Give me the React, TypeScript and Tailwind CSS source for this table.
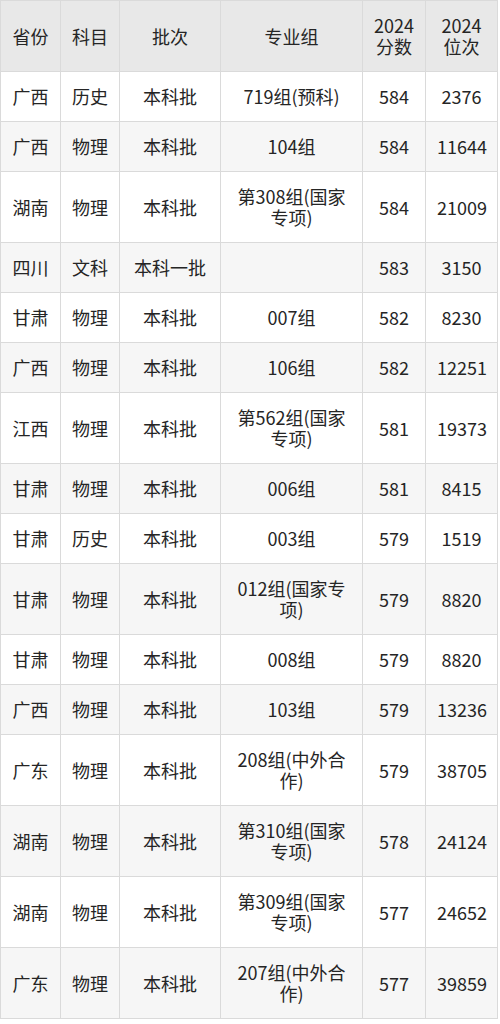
const ROWS: [string, string, string, string, string, string][] = [
  ["广西", "历史", "本科批", "719组(预科)", "584", "2376"],
  ["广西", "物理", "本科批", "104组", "584", "11644"],
  ["湖南", "物理", "本科批", "第308组(国家专项)", "584", "21009"],
  ["四川", "文科", "本科一批", "", "583", "3150"],
  ["甘肃", "物理", "本科批", "007组", "582", "8230"],
  ["广西", "物理", "本科批", "106组", "582", "12251"],
  ["江西", "物理", "本科批", "第562组(国家专项)", "581", "19373"],
  ["甘肃", "物理", "本科批", "006组", "581", "8415"],
  ["甘肃", "历史", "本科批", "003组", "579", "1519"],
  ["甘肃", "物理", "本科批", "012组(国家专项)", "579", "8820"],
  ["甘肃", "物理", "本科批", "008组", "579", "8820"],
  ["广西", "物理", "本科批", "103组", "579", "13236"],
  ["广东", "物理", "本科批", "208组(中外合作)", "579", "38705"],
  ["湖南", "物理", "本科批", "第310组(国家专项)", "578", "24124"],
  ["湖南", "物理", "本科批", "第309组(国家专项)", "577", "24652"],
  ["广东", "物理", "本科批", "207组(中外合作)", "577", "39859"],
];

const HEAD = ["省份", "科目", "批次", "专业组", "2024 分数", "2024 位次"];

const cell = "border border-[#dadada] px-[11px] pt-[14px] pb-[14px] text-center align-middle";

export default function App() {
  return (
    <div className="w-[500px] bg-white font-['Noto_Sans_CJK_SC','Noto_Sans',sans-serif] text-[18px] leading-[21px] text-[#252525]">
      <table className="w-[497px] table-fixed border-collapse">
        <colgroup>
          <col className="w-[60px]" />
          <col className="w-[59px]" />
          <col className="w-[101px]" />
          <col className="w-[142px]" />
          <col className="w-[63px]" />
          <col className="w-[72px]" />
        </colgroup>
        <thead>
          <tr className="bg-[#e8e8e8]">
            {HEAD.map((h, j) => (
              <th key={j} className={`${cell} font-normal ${j >= 4 ? "px-[8px]" : ""}`}>
                {h}
              </th>
            ))}
          </tr>
        </thead>
        <tbody>
          {ROWS.map((r, i) => (
            <tr key={i} className={i % 2 === 1 ? "bg-[#f6f6f6]" : "bg-white"}>
              {r.map((v, j) => (
                <td key={j} className={`${cell} ${j === 3 ? "px-[12px]" : ""}`}>
                  {v}
                </td>
              ))}
            </tr>
          ))}
        </tbody>
      </table>
    </div>
  );
}
